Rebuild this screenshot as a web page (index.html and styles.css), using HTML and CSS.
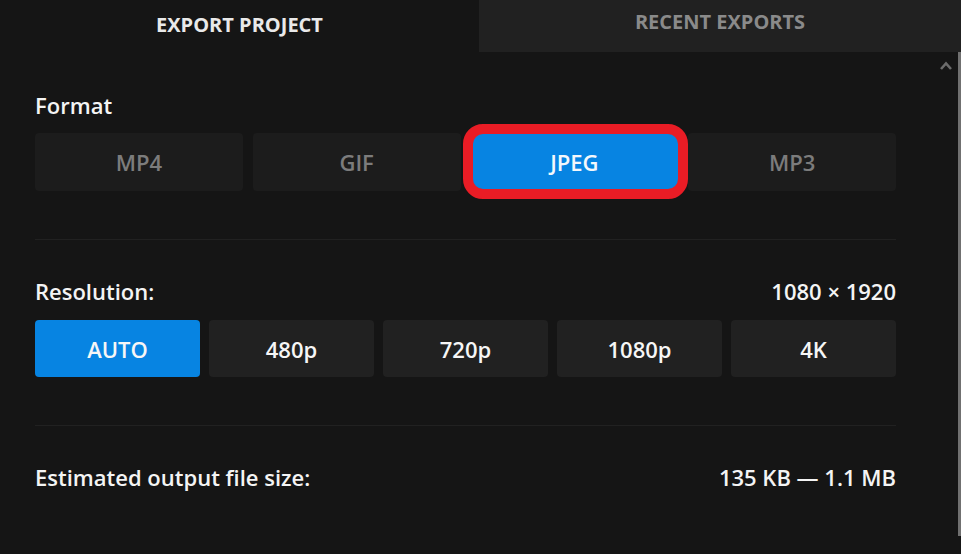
FILE: index.html
```html
<!DOCTYPE html>
<html lang="en">
<head>
<meta charset="utf-8">
<title>Export Project</title>
<link rel="stylesheet" href="styles.css">
</head>
<body>
<div class="panel">
  <div class="tabs">
    <div class="tab tab-active">EXPORT PROJECT</div>
    <div class="tab tab-inactive">RECENT EXPORTS</div>
  </div>
  <div class="body">
    <div class="content">
      <section class="section section-format">
        <div class="label">Format</div>
        <div class="format-grid">
          <div class="fbtn">MP4</div>
          <div class="fbtn">GIF</div>
          <div class="fbtn fbtn-active highlighted">JPEG</div>
          <div class="fbtn">MP3</div>
        </div>
      </section>
      <div class="divider"></div>
      <section class="section">
        <div class="row">
          <div class="label">Resolution:</div>
          <div class="value">1080 × 1920</div>
        </div>
        <div class="res-grid">
          <div class="rbtn rbtn-active">AUTO</div>
          <div class="rbtn">480p</div>
          <div class="rbtn">720p</div>
          <div class="rbtn">1080p</div>
          <div class="rbtn">4K</div>
        </div>
      </section>
      <div class="divider"></div>
      <section class="section">
        <div class="row">
          <div class="label">Estimated output file size:</div>
          <div class="value">135 KB — 1.1 MB</div>
        </div>
      </section>
    </div>
    <div class="scroll">
      <svg class="scroll-arrow" width="12" height="9" viewBox="0 0 12 9"><path d="M1 8 L6 2.5 L11 8" fill="none" stroke="#6b6b6b" stroke-width="2.6"/></svg>
      <div class="scroll-thumb"></div>
    </div>
  </div>
</div>
</body>
</html>
```
FILE: styles.css
```css
* { box-sizing: border-box; }
html, body {
  margin: 0;
  padding: 0;
  background: #151515;
}
body {
  font-family: "Open Sans", "Noto Sans", sans-serif;
  color: #f2f2f2;
  width: 961px;
  height: 554px;
  overflow: hidden;
}
.panel {
  display: flex;
  flex-direction: column;
  height: 554px;
}
.tabs {
  display: flex;
  height: 52px;
}
.tab {
  display: flex;
  align-items: center;
  justify-content: center;
  font-weight: 700;
  font-size: 20px;
}
.tab-active {
  width: 479px;
  background: #151515;
  color: #e9e9e9;
  padding-bottom: 4px;
}
.tab-inactive {
  flex: 1;
  background: #212121;
  color: #8a8a8a;
  padding-bottom: 10px;
}
.body {
  flex: 1;
  display: flex;
}
.content {
  flex: 1;
  padding: 39px 41px 0 35px;
}
.label, .value {
  font-size: 22px;
  font-weight: 600;
  line-height: 28px;
  color: #f4f4f4;
}
.row {
  display: flex;
  justify-content: space-between;
  align-items: center;
}
.format-grid {
  display: grid;
  grid-template-columns: repeat(4, 1fr);
  column-gap: 10px;
  margin-top: 14px;
}
.fbtn {
  height: 58px;
  border-radius: 4px;
  background: #1c1c1c;
  color: #7c7c7c;
  font-size: 22px;
  font-weight: 600;
  display: flex;
  align-items: center;
  justify-content: center;
}
.fbtn-active {
  background: #0784e2;
  color: #f4f8fc;
}
.highlighted {
  position: relative;
}
.highlighted::after {
  content: "";
  position: absolute;
  top: -9px;
  left: -8px;
  right: -10px;
  bottom: -8px;
  border: 10px solid #e91c25;
  border-radius: 20px;
}
.divider {
  height: 1px;
  background: #212121;
  margin: 48px 0 37px;
}
.res-grid {
  display: grid;
  grid-template-columns: repeat(5, 1fr);
  column-gap: 9px;
  margin-top: 15px;
}
.rbtn {
  height: 57px;
  border-radius: 4px;
  background: #212121;
  color: #f6f6f6;
  font-size: 22px;
  font-weight: 600;
  display: flex;
  align-items: center;
  justify-content: center;
}
.rbtn-active {
  background: #0784e2;
}
.scroll {
  width: 24px;
  display: flex;
  justify-content: space-between;
  padding-bottom: 18px;
}
.scroll-arrow {
  margin-top: 9px;
  margin-left: 3px;
}
.scroll-thumb {
  width: 3px;
  background: #707070;
}
```
